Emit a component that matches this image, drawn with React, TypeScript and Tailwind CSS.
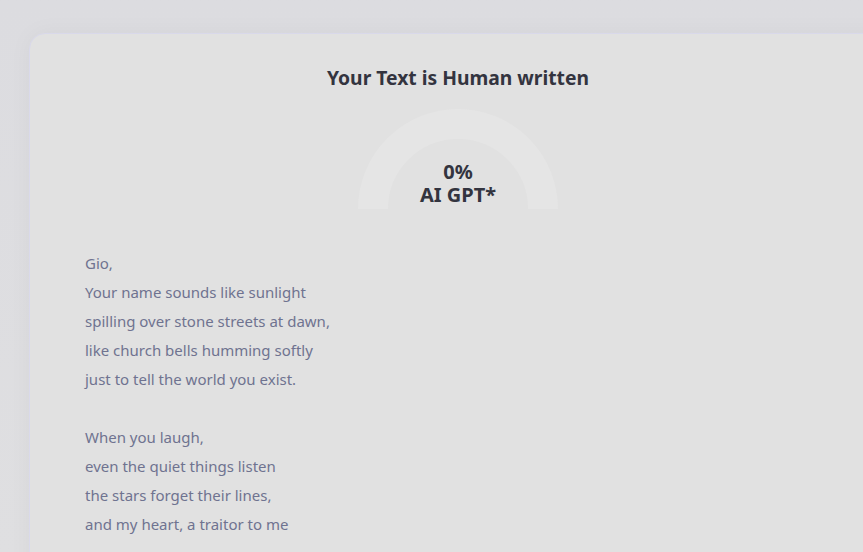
import React from "react";

const stanzas = [
  [
    "Gio,",
    "Your name sounds like sunlight",
    "spilling over stone streets at dawn,",
    "like church bells humming softly",
    "just to tell the world you exist.",
  ],
  [
    "When you laugh,",
    "even the quiet things listen",
    "the stars forget their lines,",
    "and my heart, a traitor to me",
  ],
];

function Gauge({ percent }: { percent: number }) {
  return (
    <div className="relative w-[200px] h-[100px]">
      <svg width="200" height="100" viewBox="0 0 200 100" className="absolute inset-0">
        <path d="M15 100 A85 85 0 0 1 185 100" fill="none" stroke="#e5e5e5" strokeWidth="30" />
      </svg>
      <div className="absolute inset-x-0 bottom-[3px] flex flex-col items-center text-[20px] font-bold leading-[23px] text-[#33343f]">
        <span>{percent}%</span>
        <span>AI GPT*</span>
      </div>
    </div>
  );
}

export default function App() {
  return (
    <div
      className="w-full h-[552px] overflow-hidden bg-gradient-to-b from-[#dcdce0] to-[#dfdfe1] pt-[33px] pl-[29px]"
      style={{ fontFamily: '"Noto Sans", "Open Sans", sans-serif' }}
    >
      <div className="w-[858px] h-[600px] rounded-tl-[16px] border border-[#d9d9ea] bg-[#e1e1e1] shadow-[0_0_24px_rgba(0,0,0,0.04)] flex flex-col items-center pt-[29px]">
        <h1 className="text-[19.3px] font-bold leading-[30px] text-[#33343f]">Your Text is Human written</h1>
        <div className="mt-[16px]">
          <Gauge percent={0} />
        </div>
        <div className="self-stretch pl-[55px] mt-[40px] text-[15px] leading-[29px] text-[#6f7390]">
          {stanzas.map((lines, i) => (
            <div key={i} className={i > 0 ? "mt-[29px]" : ""}>
              {lines.map((l) => (
                <div key={l}>{l}</div>
              ))}
            </div>
          ))}
        </div>
      </div>
    </div>
  );
}
